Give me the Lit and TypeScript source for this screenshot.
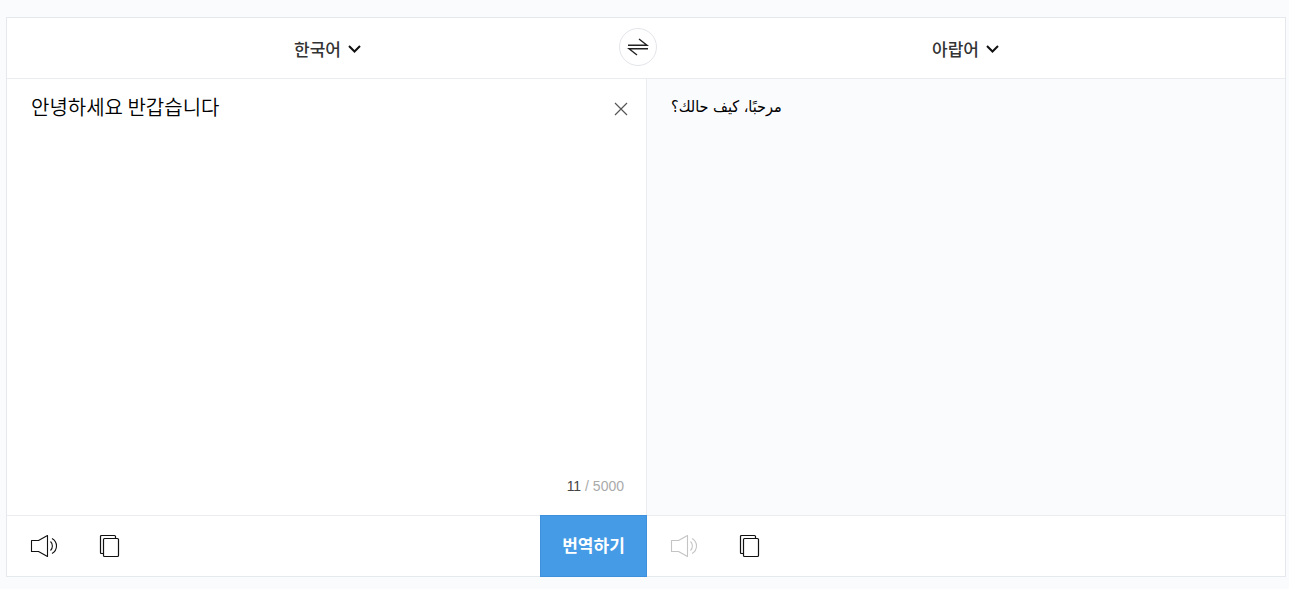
import { LitElement, html, css, svg } from "lit";
import { customElement, property, state } from "lit/decorators.js";

const LANGUAGES = ["한국어", "아랍어", "영어", "일본어"];

const speakerIcon = svg`
  <svg width="28" height="24" viewBox="0 0 28 24" fill="none" stroke="currentColor" stroke-width="1.1" aria-hidden="true">
    <path d="M1.5 6.5H8.5L17.5 1.5V22.5L8.5 17.5H1.5Z" stroke-linejoin="round" />
    <path d="M20.5 7.5C23 9.7 23 14.3 20.5 16.5" />
    <path d="M22 4.5C28 8 28 16 22 19.5" />
  </svg>`;

const copyIcon = svg`
  <svg width="22" height="24" viewBox="0 0 22 24" fill="none" stroke="currentColor" stroke-width="1.2" aria-hidden="true">
    <path d="M4.5 19.5H2.5Q1.5 19.5 1.5 18.5V2.5Q1.5 1.5 2.5 1.5H15.5Q16.5 1.5 16.5 2.5V4" />
    <rect x="4.5" y="4.5" width="15" height="18" rx="1" />
  </svg>`;

@customElement("language-select")
export class LanguageSelect extends LitElement {
  @property() label = "";
  @property() value = "";

  static styles = css`
    :host { display: inline-block; }
    .wrap { display: grid; align-items: center; }
    .select {
      grid-area: 1 / 1;
      appearance: none;
      field-sizing: content;
      margin: 0;
      padding: 0 21px 0 0;
      border: 0;
      background: transparent;
      color: #333;
      font: 500 17px/28px "Noto Sans CJK KR", sans-serif;
      cursor: pointer;
    }
    .chevron {
      grid-area: 1 / 1;
      justify-self: end;
      pointer-events: none;
    }
  `;

  render() {
    return html`
      <div class="wrap">
        <select class="select" aria-label=${this.label}>
          ${LANGUAGES.map((l) => html`<option ?selected=${l === this.value}>${l}</option>`)}
        </select>
        <svg class="chevron" width="14" height="10" viewBox="0 0 14 10" fill="none" stroke="#111" stroke-width="2" aria-hidden="true">
          <path d="M1 2L6.5 7.5L12 2" />
        </svg>
      </div>
    `;
  }
}

@customElement("app-root")
export class AppRoot extends LitElement {
  @state() private text = "안녕하세요 반갑습니다";

  static styles = css`
    :host {
      display: flex;
      box-sizing: border-box;
      min-height: 100vh;
      padding: 17px 3px 12px 6px;
      background: #fafbfd;
      font-family: "Noto Sans CJK KR", sans-serif;
      color: #000;
    }
    button { margin: 0; padding: 0; border: 0; background: none; font: inherit; cursor: pointer; }
    svg { display: block; }
    .card {
      flex: 1;
      display: grid;
      grid-template-rows: 60px 1fr 61px;
      border: 1px solid #e5e8ec;
      background: #fff;
    }
    .header {
      display: grid;
      grid-template-columns: 1fr 1fr;
      place-items: center;
      position: relative;
      padding: 2px 0 0 2px;
    }
    .swap {
      position: absolute;
      top: 10px;
      left: calc(50% - 27px);
      display: grid;
      place-items: center;
      box-sizing: border-box;
      width: 38px;
      height: 38px;
      border: 1px solid #e3e5ea;
      border-radius: 50%;
      background: #fff;
    }
    .body, .footer { display: grid; grid-template-columns: 1fr 1fr; border-top: 1px solid #ebecef; }
    .source { display: grid; grid-template: 1fr auto / 1fr auto; }
    .input {
      display: block;
      box-sizing: border-box;
      width: 100%;
      height: 100%;
      margin: 0;
      padding: 14px 24px;
      border: 0;
      outline: 0;
      resize: none;
      background: transparent;
      color: #000;
      font: 350 20px/28px "Noto Sans CJK KR", sans-serif;
    }
    .clear { align-self: start; margin: 22px 17px 0 0; }
    .count {
      grid-column: 1 / -1;
      justify-self: end;
      padding: 0 22px 20px 0;
      color: #aaa;
      font: 14px/18px "Liberation Sans", Arial, sans-serif;
    }
    .used { color: #444; }
    .result {
      display: block;
      padding: 14px 24px;
      border-left: 1px solid #ebecef;
      background: #fafbfd;
      font: 16px/28px "DejaVu Sans Condensed", "DejaVu Sans", sans-serif;
    }
    .tools { display: flex; align-items: center; gap: 41px; padding-left: 23px; }
    .tools.target { padding-left: 24px; }
    .tool { color: #111; }
    .tool:disabled { color: #c4c4c4; cursor: default; }
    .translate {
      align-self: stretch;
      box-sizing: border-box;
      width: 107px;
      margin: -1px -1px -1px auto;
      padding-bottom: 4px;
      border: 1px solid #3d91dc;
      background: #459be5;
      color: #fff;
      font-weight: 700;
      font-size: 17px;
    }
  `;

  private onInput(e: Event) {
    this.text = (e.target as HTMLTextAreaElement).value;
  }

  render() {
    return html`
      <main class="card">
        <header class="header">
          <language-select label="원본 언어" value="한국어"></language-select>
          <language-select label="번역 언어" value="아랍어"></language-select>
          <button class="swap" aria-label="언어 바꾸기">
            <svg width="22" height="18" viewBox="0 0 22 18" fill="none" stroke="#222" stroke-width="1.4" aria-hidden="true">
              <path d="M1 7.3H20L12 1" />
              <path d="M21 10.7H2L10 17" />
            </svg>
          </button>
        </header>
        <section class="body">
          <div class="source">
            <textarea class="input" aria-label="번역할 내용" spellcheck="false" .value=${this.text} @input=${this.onInput}></textarea>
            <button class="clear" aria-label="지우기" @click=${() => (this.text = "")}>
              <svg width="16" height="16" viewBox="0 0 16 16" fill="none" stroke="#555" stroke-width="1.2" aria-hidden="true">
                <path d="M2 2L14 14M14 2L2 14" />
              </svg>
            </button>
            <div class="count"><span class="used">${this.text.length}</span> / 5000</div>
          </div>
          <output class="result" lang="ar">مرحبًا، كيف حالك؟</output>
        </section>
        <footer class="footer">
          <div class="tools">
            <button class="tool" aria-label="원문 듣기">${speakerIcon}</button>
            <button class="tool" aria-label="원문 복사">${copyIcon}</button>
            <button class="translate">번역하기</button>
          </div>
          <div class="tools target">
            <button class="tool" aria-label="번역 듣기" disabled>${speakerIcon}</button>
            <button class="tool" aria-label="번역 복사">${copyIcon}</button>
          </div>
        </footer>
      </main>
    `;
  }
}
